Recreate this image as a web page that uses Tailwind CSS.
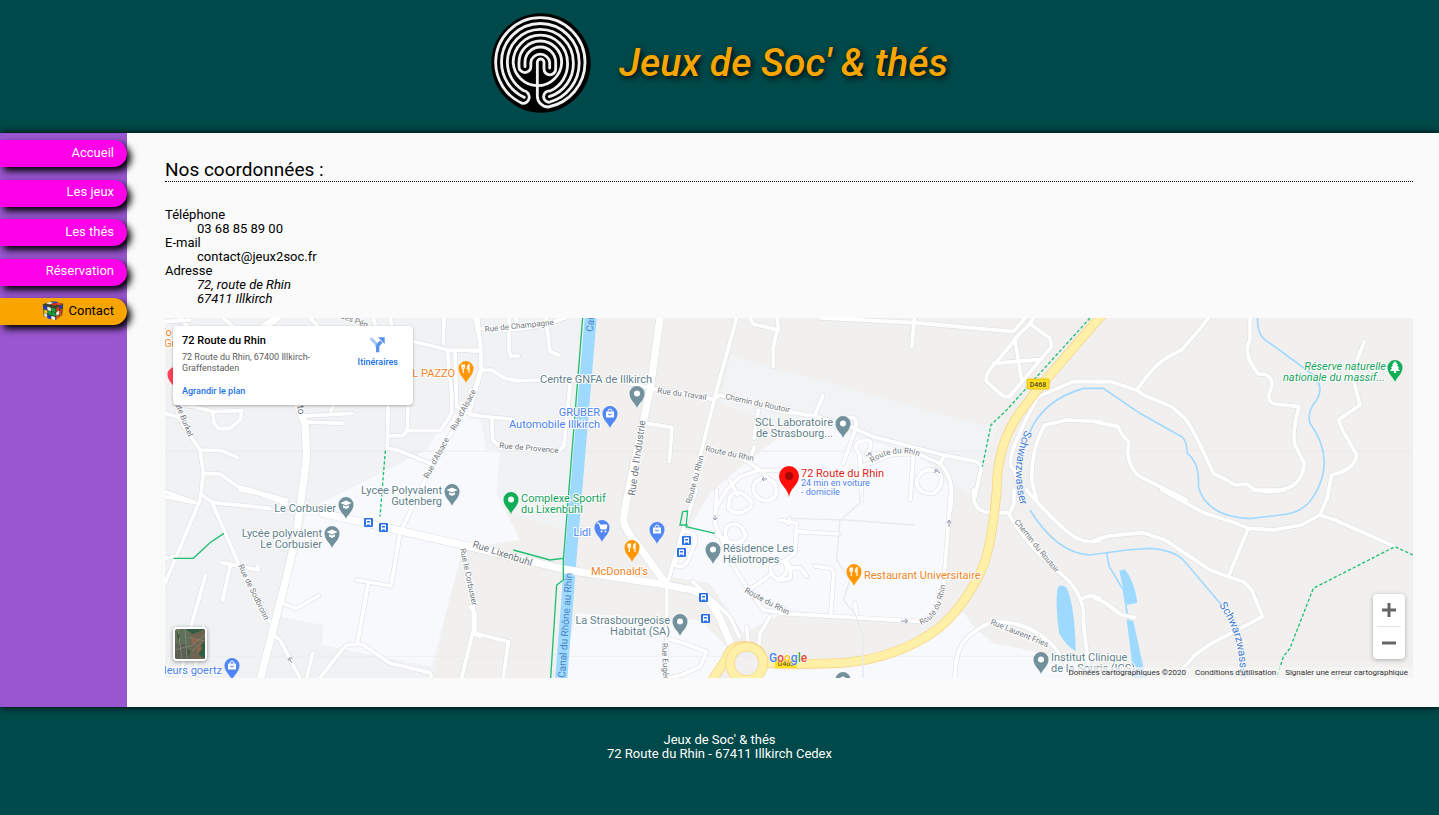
<!DOCTYPE html>
<html lang="fr">
<head>
<meta charset="utf-8">
<meta name="viewport" content="width=device-width, initial-scale=1">
<title>Jeux de Soc' &amp; thés</title>
<script src="https://cdn.jsdelivr.net/npm/@tailwindcss/browser@4"></script>
</head>
<body class="flex min-h-screen flex-col bg-[#00494a] font-['Roboto',sans-serif] text-[13px] leading-[14px] text-black">

<header class="flex items-center justify-center gap-7 pt-[13px] pb-5">
  <svg class="size-[100px]" viewBox="18 15 300 300" role="img" aria-label="Labyrinthe">
    <circle cx="168" cy="165" r="149" fill="#000"/>
    <g fill="none" stroke="#f1f1f1" stroke-width="8.500" stroke-linecap="round" stroke-linejoin="round">
      <path d="M120 176V163A46 46 0 0 1 212 163V183A17.5 17.5 0 0 1 177 183V163A10 10 0 0 0 157 163V264A33 33 0 0 0 190 297A136 136 0 0 0 300 163A134 134 0 0 0 32 163A136 136 0 0 0 111 286A18 18 0 0 0 116 248A99 99 0 0 1 67 163A99 99 0 0 1 265 163A103 103 0 0 1 193 266"/>
      <path d="M194 180V163A28.5 28.5 0 0 0 137.500 163V176A17.750 17.750 0 0 1 102 176V163A64 64 0 0 1 230 163A72 72 0 0 1 157 233A74 74 0 0 1 84.500 163A81.500 81.500 0 0 1 247.500 163A88 88 0 0 1 195 249A17 17 0 0 0 191 283A121 121 0 0 0 282.500 163A116.500 116.500 0 0 0 49.500 163A116 116 0 0 0 118 268"/>
    </g>
  </svg>
  <h1 class="text-[39px] leading-[48px] font-medium italic text-[#f9a500] [text-shadow:2px_2px_6px_#000]">Jeux de Soc' &amp; thés</h1>
</header>

<div class="relative flex bg-[#fafafa] shadow-[0_0_8px_#000]">
  <nav class="w-[127px] shrink-0 bg-[#9956d0] pt-[7px]" aria-label="Menu principal">
    <ul class="flex h-[185px] flex-col justify-between text-white">
      <li><a href="#accueil" class="flex h-[27px] items-center justify-end rounded-r-full bg-[#ff00e8] pr-[13px] pb-[2px] shadow-[4px_4px_7px_#000]">Accueil</a></li>
      <li><a href="#jeux" class="flex h-[27px] items-center justify-end rounded-r-full bg-[#ff00e8] pr-[13px] pb-[2px] shadow-[4px_4px_7px_#000]">Les jeux</a></li>
      <li><a href="#thes" class="flex h-[27px] items-center justify-end rounded-r-full bg-[#ff00e8] pr-[13px] pb-[2px] shadow-[4px_4px_7px_#000]">Les thés</a></li>
      <li><a href="#reservation" class="flex h-[27px] items-center justify-end rounded-r-full bg-[#ff00e8] pr-[13px] pb-[2px] shadow-[4px_4px_7px_#000]">Réservation</a></li>
      <li><a href="#contact" aria-current="page" class="flex h-[27px] items-center justify-end gap-[5px] rounded-r-full bg-[#f9a500] pr-[13px] pb-[2px] text-black shadow-[4px_4px_7px_#000]">
        <svg class="h-5 w-[22px]" viewBox="0 0 60 60" preserveAspectRatio="none" aria-hidden="true">
          <path d="M2 10L27 1L58 8L55 42L36 58L5 46Z" fill="#39442a"/>
          <g stroke-width="1.500" stroke-linejoin="round">
          <path d="M13 7l8-3 8 2-8 3z" fill="#fff" stroke="#fff"/><path d="M25 10l9-3 9 2-8 4z" fill="#f22c16" stroke="#f22c16"/><path d="M40 5l8 1 7 3-7 3-8-3z" fill="#ef4a21" stroke="#ef4a21"/><path d="M31 4l6-2 6 2-6 2z" fill="#2a46dd" stroke="#2a46dd"/>
          <path d="M4 14l8 3v9l-7-3zM15 42l8 3v9l-7-3z" fill="#2634d9" stroke="#2634d9"/><path d="M15 18l9 3v9l-8-3zM7 37l6 2v9l-6-3z" fill="#e4f0dc" stroke="#e4f0dc"/><path d="M27 22l9 2v9l-9-2zM17 30l8 3v9l-7-3zM28 34l8 3v8l-8-3z" fill="#17a63a" stroke="#17a63a"/><path d="M6 27l8 2v8l-7-2z" fill="#efca21" stroke="#efca21"/><path d="M26 46l9 3v8l-8-3z" fill="#fff" stroke="#fff"/>
          <path d="M40 22l6-4v9l-6 5zM49 27l5-3-1 8-5 4z" fill="#ee3a18" stroke="#ee3a18"/><path d="M49 16l6-4v8l-6 4z" fill="#2739cf" stroke="#2739cf"/><path d="M40 34l6-4v9l-6 4z" fill="#fff" stroke="#fff"/><path d="M39 47l6-4v6l-6 5zM48 38l5-3-1 7-4 4z" fill="#ef551e" stroke="#ef551e"/>
          </g>
        </svg>
        <span>Contact</span></a></li>
    </ul>
  </nav>

  <main class="min-w-0 flex-1 pt-[25px] pr-[26px] pb-[29px] pl-[38px]">
    <h2 class="border-b border-dotted border-black text-[19px] leading-[23px]">Nos coordonnées :</h2>
    <dl class="mt-[26px]">
      <dt>Téléphone</dt>
      <dd class="ml-8">03 68 85 89 00</dd>
      <dt>E-mail</dt>
      <dd class="ml-8">contact@jeux2soc.fr</dd>
      <dt>Adresse</dt>
      <dd class="ml-8"><address>72, route de Rhin<br>67411 Illkirch</address></dd>
    </dl>

    <section class="relative mt-3 h-[360px] overflow-hidden bg-[#f1f0ef]" aria-label="Plan d'accès">
      <svg class="block h-full w-full" viewBox="165 318 1248 360" preserveAspectRatio="xMidYMid slice" role="img" aria-label="Carte d'Illkirch-Graffenstaden">
        <defs>
          <path id="pin" d="M0 0C-1-4-7.500-8-7.500-14.500a7.500 7.500 0 0 1 15 0C7.500-8 1-4 0 0z"/>
          <g id="dot"><use href="#pin"/><circle cy="-14.500" r="3" fill="#fff"/></g>
          <g id="school"><use href="#pin"/><path d="M-5.500-16L0-18.500 5.500-16 0-13.500zM-3-13.800L0-12.500 3-13.800V-11.500L0-10-3-11.500z" fill="#fff"/></g>
          <g id="food"><use href="#pin"/><path d="M-4-18.500v3q0 1 1.200 1.200V-10M-1.500-18.500v3q0 1-1.300 1.200M-2.800-18.500v3M3-10v-8.500q-1.600 1-1.600 4.500H3" fill="none" stroke="#fff" stroke-width="1.200"/></g>
          <g id="bag"><use href="#pin"/><path d="M-4-16.500h8v6h-8z" fill="#fff"/><path d="M-2-16.500q0-2.500 2-2.500t2 2.500" fill="none" stroke="#fff"/><path d="M-2-14q2 2 4 0" fill="none" stroke="#5186f5"/></g>
          <g id="bus"><rect width="9" height="9" rx="1" fill="#2b70ea"/><path d="M2 1.500h5v6h-1v-1h-3v1h-1z" fill="#fff"/><path d="M3 3h3v1.500H3z" fill="#2b70ea"/></g>
          <g id="lanes">
            <g transform="translate(480 930)">
              <path d="M15 35L90 30M60 24L82 48M190 24L220 50M450 24L480 55L600 70M640 24L650 60M690 24L700 70M852 24L850 100M640 80L765 95L865 120L955 122M748 95L742 362M685 250L682 414L717 422L810 460M685 378L730 376L740 362L842 362L875 310V250L862 120M885 120L890 290L925 310L960 318M435 318L575 310M440 336L550 340M512 302L525 280M15 310L50 320M40 250L60 330L120 420L130 490L122 560M50 285L105 290L160 305L245 302L240 330L210 355H175L162 340L158 305M120 420L185 422L232 442M130 490L180 492L235 530L290 545L380 570M15 545L100 575"/>
              <path d="M955 24V60L962 110V180L940 250L790 520L720 670"/>
            </g>
            <g transform="translate(480 1470)">
              <path d="M15 20L105 38M125 15L155 35L235 220L330 395M15 280L120 30M185 218L295 240L293 230M210 232L188 330M137 255L90 420L60 560M130 410L100 560M370 340L408 356L475 318M590 270L693 288L722 118M625 280L592 460M480 564L530 500L560 465L605 462L690 520L810 548L815 564M340 435L360 450L420 564M458 490L440 564M240 0L300 12L380 42M160 38L330 55M15 205L40 200"/>
              <path d="M912 170L940 350V420L905 564M940 430L960 440"/>
            </g>
            <g transform="translate(1410 930)">
              <path d="M15 24L30 90L35 180L0 300M0 122H30M20 55L120 60L200 50L285 24M117 24V120L122 138H145M228 24L240 125L268 135M138 24L142 50M35 180H65L105 205L140 212L240 210H440L540 235M300 225L282 408L265 425L90 410L68 390L66 325M0 315L130 328M540 235L732 268L750 255L960 310M530 340L606 352L598 455M865 300L852 385M853 410L845 435M825 450L870 480L890 500M840 24L850 42L925 60L922 24M922 60L910 110V170"/>
              <path d="M800 24L740 240L700 400L655 570M985 480L860 482L810 500L770 540L740 590M780 510L802 555M850 530Q855 505 885 505Q920 510 920 540T885 572Q850 565 850 530Z"/>
            </g>
            <g transform="translate(1410 1470)">
              <path d="M678 0L630 150L595 270M640 125Q680 120 675 160L655 210Q640 240 615 225L632 160M668 275L780 380L808 440M590 300V564M590 445L640 460L710 485L690 530L635 555L595 564M0 350L15 370V430L115 455L100 564M740 0L735 100L780 210L835 300L880 360L960 372M780 20Q800-5 830 20T830 60Q800 80 775 55ZM770 110Q800 90 820 120T795 160Q755 155 770 110M835 300L880 270L905 250Q890 220 930 215T960 265Q920 280 905 250M780 160L735 130M900 380L870 430L865 480M830 410L835 470"/>
            </g>
            <g transform="translate(2340 930)">
              <path d="M120 24L400 38L700 65L735 24M403 24L396 110M705 85L750 42L810 85L815 110L785 145L690 258Q680 265 665 255L620 215Q615 205 625 185L705 90L725 210M640 160L785 148M750 42L760 24M0 300L110 320L210 350L280 380L490 435L590 455L605 470L585 560M105 315L128 258M190 460L225 360Q235 325 215 322T200 350M240 435Q210 400 250 392T260 435M240 440L245 570M245 470L330 435L410 430L480 460Q510 490 515 540L512 600M480 460L495 435M400 440L390 570M410 510Q425 475 455 480T485 510T460 550Q410 555 410 510"/>
              <path d="M960 215H880L775 260Q740 320 708 395T705 480L725 570M960 335L860 330L795 345Q755 410 755 510L770 570"/>
            </g>
            <g transform="translate(2340 1470)">
              <path d="M512 0L505 100L490 300L475 350L430 395L230 383L0 370M580 0Q575 65 630 68H690L702 40V0M685 70Q750 180 835 245T910 400L930 564M910 325Q930 310 960 325M740 0Q790 60 850 115T960 150M105 228L150 235Q165 240 160 270L152 375M0 90L50 100L45 190L10 215L25 235L60 232L80 258M55 125L178 132M25 100L30 85M0 265Q25 250 20 232M225 340L230 385M525 564Q525 480 560 445T640 395Q760 395 830 480L870 540"/>
            </g>
            <g transform="translate(3285 930)">
              <path d="M0 215H50L105 235L125 240L145 255L230 290L270 325Q290 350 320 415T355 490L395 510L420 525L455 522L480 540H550Q620 535 628 460L600 405Q590 370 612 290L540 282Q510 275 530 230Q535 190 490 192Q440 130 465 90V24M125 240Q175 170 205 150T260 120L320 50L340 24M0 335L70 350Q80 380 102 395L98 430Q105 480 135 500L275 570M808 95L770 190L795 285L730 330L745 365L785 435Q780 480 710 495L695 570"/>
            </g>
            <g transform="translate(3285 1470)">
              <path d="M200 0L330 70L410 95L460 115L535 120L620 105L675 75L700 15V0M675 75L720 90L900 170M460 115L400 260M0 150L40 138L145 128L210 150L345 240L400 260L445 275L470 300L503 380L350 460L300 495L260 540M0 325L30 338L80 375L120 383M475 0Q530 10 570 0"/>
            </g>
          </g>
          <g id="avenues">
            <path d="M880 1185L915 1270L920 1370L890 1600L860 1730L780 2040M970 1540L1410 1640L1700 1710L2000 1755L2050 1765Q2120 1770 2160 1855L2200 1950M1980 954L1950 1170L1880 1500L1870 1560Q1875 1590 1910 1630L1990 1740M750 1010L830 954"/>
          </g>
          <path id="main-road" d="M2130 2050L2180 1975Q2190 1935 2240 1938Q2280 1940 2290 1980Q2310 1995 2370 1993L2500 1990Q2650 1985 2770 1915Q2870 1860 2940 1720Q2975 1650 2990 1470Q2990 1330 3065 1230L3120 1160L3310 940"/>
        </defs>
        <g transform="scale(.33333)">
          <path d="M495 954H1740L1700 1590L1400 1500L1380 1630L1300 2034H495Z" fill="#f1f2f4"/>
          <path d="M920 1530L1280 1350L1350 1240L1440 1250L1480 1460L1560 1620L1420 1640L1390 1640L1295 2000L965 1935L970 1875L840 1850Z" fill="#f8f9fc"/>
          <path d="M1430 1350L1500 1350L1480 1600L1420 1600Z" fill="#f8f9fc"/>
          <path d="M2190 1065L2960 1280L3010 1240L2950 1390L2920 1490L2780 1410L2380 1290L2160 1210Z" fill="#f1f3f4"/>
          <path d="M2130 1480L2200 1420L2400 1260L2770 1370L2850 1460L2830 1790L2770 1865L2350 1840L2230 1900L2130 1750L2000 1730L2080 1560Z" fill="#f8f9fc"/>
          <path d="M1730 1840L2100 1860L2180 1940L2130 2034H1680Z" fill="#f8f9fc"/>
          <path d="M2220 2034L2350 1995L2590 1980L2760 1930L2890 1835L2920 1880L2980 1930L3240 1980V2034Z" fill="#f8f9fc"/>
          <path d="M495 1354H4239M495 1969H4239" fill="none" stroke="#e9eaeb" stroke-width="2"/>
          <path d="M1772 954L1712 1670L1684 2034" fill="none" stroke="#9edaff" stroke-width="36"/>
          <g fill="none" stroke="#a2d9ff" stroke-width="5">
            <path d="M3090 1295Q3130 1200 3250 1165L3310 1165L3420 1240L3545 1310Q3560 1320 3562 1360Q3600 1390 3595 1460Q3620 1550 3750 1556L3840 1545Q3910 1540 3940 1490Q4010 1380 3930 1270Q3920 1235 3950 1200Q3980 1150 3920 1110L3810 1030Q3770 1010 3773 954M3090 1530Q3170 1660 3270 1665L3380 1650L3450 1645Q3520 1650 3550 1680L3665 1815M3320 1660L3328 1700L3370 1770L3385 1860"/>
          </g>
          <path d="M3173 1763Q3182 1750 3200 1763Q3225 1820 3227 1954Q3200 1940 3177 1900Q3165 1800 3173 1763ZM3358 1712L3375 1708Q3405 1750 3412 1808L3380 1815ZM3380 1860L3400 1862L3437 2034H3402Z" fill="#9edaff"/>
          <g fill="none" stroke-linecap="round" stroke-linejoin="round">
            <use href="#lanes" stroke="#dfe3e7" stroke-width="15"/>
            <use href="#avenues" stroke="#dfe3e7" stroke-width="26"/>
            <use href="#lanes" stroke="#fff" stroke-width="11"/>
            <use href="#avenues" stroke="#fff" stroke-width="22"/>
            <use href="#main-road" stroke="#f7d58a" stroke-width="29"/>
            <use href="#main-road" stroke="#fff0a8" stroke-width="24"/>
            <circle cx="2240" cy="1990" r="50" stroke="#f7d58a" stroke-width="29"/>
            <circle cx="2240" cy="1990" r="50" stroke="#fff0a8" stroke-width="24"/>
            <path d="M2585 1480L2580 1510L2520 1560L2510 1680L2550 1740L2530 1800L2565 1840L2590 1910V2034M2370 1555L2540 1560L2740 1575" stroke="#e8eaed" stroke-width="4"/>
          </g>
          <g fill="none" stroke="#1fbf72" stroke-width="4">
            <path d="M1748 954L1690 1680M1540 1650L1650 1680L1690 1675V1740L1670 1755L1652 2034M520 1675H580L630 1628L672 1600M2048 1535L2063 1533L2058 1580L2145 1600M2063 1575H2040L2048 1535"/>
            <path d="M1156 1352L1140 1550M3270 954L3020 1230L2973 1275L2947 1400M4239 1665L4185 1640L3940 1765L3870 1945L3850 1970L3830 2034" stroke-dasharray="10 6"/>
          </g>
        </g>

        <!-- Noms des rues -->
        <g font-size="8" fill="#70767d" stroke="#fff" stroke-width="2" stroke-linejoin="round" paint-order="stroke">
          <text transform="translate(340 318) rotate(20)">des Pén</text>
          <text transform="translate(485 332) rotate(-6)">Rue de Champagne</text>
          <text transform="translate(499 448) rotate(5)">Rue de Provence</text>
          <text transform="translate(657 393) rotate(8)">Rue du Travail</text>
          <text transform="translate(725 399) rotate(12)">Chemin du Routoir</text>
          <text transform="translate(705 451) rotate(12)">Route du Rhin</text>
          <text transform="translate(691 504) rotate(-75)">Route du Rhin</text>
          <text transform="translate(428 479) rotate(-62)">Rue d'Alsace</text>
          <text transform="translate(455 431) rotate(-62)">Rue d'Alsace</text>
          <text transform="translate(175 404) rotate(68)">ute Burkel</text>
          <text transform="translate(238 566) rotate(64)">Rue de Sodbronn</text>
          <text transform="translate(460 549) rotate(78)">Rue le Corbusier</text>
          <text transform="translate(662 643) rotate(88)">Rue Eugène</text>
          <text transform="translate(1014 522) rotate(51)">Chemin du Routoir</text>
          <text transform="translate(990 624) rotate(22)">Rue Laurent Fries</text>
          <text transform="translate(744 592) rotate(28)">Route du Rhin</text>
          <path id="rhin-nord" d="M872 463Q893 448 918 456" fill="none" stroke="none"/>
          <text><textPath href="#rhin-nord">Route du Rhin</textPath></text>
          <path id="rhin-est" d="M921 625Q942 618 946 580" fill="none" stroke="none"/>
          <text><textPath href="#rhin-est">Route du Rhin</textPath></text>
          <text transform="translate(297 406) rotate(80)" font-size="10">to</text>
          <text transform="translate(635 496) rotate(-82)" font-size="10">Rue de l'Industrie</text>
          <text transform="translate(472 547) rotate(18)" font-size="10">Rue Lixenbuhl</text>
        </g>
        <g font-size="10" fill="#4c82c4">
          <text transform="translate(565 678) rotate(-86)">Canal du Rhône au Rhin</text>
          <text transform="translate(593 332) rotate(-86)">Canal</text>
          <path id="river-a" d="M1025 430Q1004 480 1031 530" fill="none"/>
          <path id="river-b" d="M1219 605Q1244 640 1239 690" fill="none"/>
          <g font-size="11" fill="#3f7ad0" stroke="#fff" stroke-width="1" paint-order="stroke"><text><textPath href="#river-a">Schwarzwasser</textPath></text><text><textPath href="#river-b">Schwarzwasser</textPath></text></g>
        </g>

        <!-- Lieux -->
        <g font-size="11" stroke="#fff" stroke-width="2" stroke-linejoin="round" paint-order="stroke">
          <g fill="#5f7f8d">
            <text x="540" y="383">Centre GNFA de Illkirch</text>
            <text x="833" y="426" text-anchor="end">SCL Laboratoire</text><text x="833" y="437" text-anchor="end">de Strasbourg...</text>
            <text x="442" y="494" text-anchor="end">Lycee Polyvalent</text><text x="442" y="505" text-anchor="end">Gutenberg</text>
            <text x="336" y="512" text-anchor="end">Le Corbusier</text>
            <text x="322" y="537" text-anchor="end">Lycée polyvalent</text><text x="322" y="548" text-anchor="end">Le Corbusier</text>
            <text x="723" y="552">Résidence Les</text><text x="723" y="563">Héliotropes</text>
            <text x="670" y="624" text-anchor="end">La Strasbourgeoise</text><text x="670" y="635" text-anchor="end">Habitat (SA)</text>
            <text x="1051" y="661">Institut Clinique</text><text x="1051" y="672">de la Souris (ICS)</text>
          </g>
          <g fill="#4a80ee">
            <text x="600" y="416" text-anchor="end">GRUBER</text><text x="600" y="428" text-anchor="end">Automobile Illkirch</text>
            <text x="591" y="536" text-anchor="end">Lidl</text><text x="222" y="674" text-anchor="end">leurs goertz</text>
            <text x="801" y="486" font-size="9">24 min en voiture</text><text x="801" y="495" font-size="9">- domicile</text>
          </g>
          <g fill="#f08326">
            <text x="455" y="377" text-anchor="end">IL PAZZO</text><text x="591" y="575">McDonald's</text><text x="864" y="579">Restaurant Universitaire</text>
            <text x="164" y="336">'o</text><text x="164" y="347">Gr</text>
          </g>
          <g fill="#14a15a">
            <text x="521" y="502">Complexe Sportif</text><text x="521" y="513">du Lixenbuhl</text>
            <g font-style="italic"><text x="1386" y="370" text-anchor="end">Réserve naturelle</text><text x="1385" y="381" text-anchor="end">nationale du massif...</text></g>
          </g>
          <text x="801" y="477" fill="#dc1c20">72 Route du Rhin</text>
        </g>
        <g fill="#73919d">
          <use href="#dot" x="637" y="408"/><use href="#dot" x="843" y="438"/><use href="#dot" x="713" y="564"/><use href="#dot" x="680" y="636"/><use href="#dot" x="1041" y="674"/><use href="#dot" x="843" y="694"/>
          <use href="#school" x="346" y="519"/><use href="#school" x="332" y="548"/><use href="#school" x="452" y="506"/>
        </g>
        <g fill="#ff9800"><use href="#food" x="466" y="383"/><use href="#food" x="632" y="562"/><use href="#food" x="854" y="586"/></g>
        <g fill="#5186f5"><use href="#bag" x="610" y="428"/><use href="#bag" x="657" y="544"/><use href="#bag" x="232" y="680"/><use href="#pin" x="602" y="542"/></g>
        <path d="M597 523h2l2 6h5l1-4h-7" fill="#fff" stroke="#fff"/><circle cx="601.500" cy="531.500" r="1" fill="#fff"/><circle cx="605.500" cy="531.500" r="1" fill="#fff"/>
        <g fill="#0fae57"><use href="#dot" x="511" y="514"/><use href="#pin" x="1395" y="382"/></g>
        <path d="M1395 361l3 4h-1l2 3h-1l2 3h-4v2h-2v-2h-4l2-3h-1l2-3h-1z" fill="#fff"/>
        <g fill="#ff4257"><use href="#pin" x="175" y="389"/></g>
        <path d="M789 497C788 488 779 485 779 476a10 10 0 0 1 20 0C799 485 790 488 789 497z" fill="#fe0f0b"/><circle cx="789" cy="476" r="4" fill="#a50a08"/>
        <use href="#bus" x="364" y="518"/><use href="#bus" x="379" y="523"/><use href="#bus" x="682" y="536"/><use href="#bus" x="677" y="548"/><use href="#bus" x="699" y="593"/><use href="#bus" x="701" y="614"/>
        <g fill="none" stroke="#9297b0"><path d="M949 527v-6m-2 2l2-3 2 3M901 621h6m-2-2l3 2-3 2M292 663l-3-5m0 3v-3h3M762 479h5m-3-2l-2 2 2 2M715 515v5m-2-2l2 2 2-2M866 456l5-3m-3 0h3v3M935 470l5 3m-5 0v-3h3"/></g>
        <rect x="1027" y="379" width="22" height="10" rx="1" fill="#ffdf20" stroke="#e8c20d"/><text x="1038" y="387" text-anchor="middle" font-size="7" font-weight="500" fill="#4c4520">D468</text>
        <rect x="775" y="659" width="22" height="9" rx="1" fill="#ffdf20"/><text x="786" y="666" text-anchor="middle" font-size="7" fill="#4c4520">D468</text>
        <text x="769" y="662" font-size="12" font-weight="500" stroke="#fff" stroke-width="1" paint-order="stroke"><tspan fill="#4285f4">G</tspan><tspan fill="#ea4335">o</tspan><tspan fill="#fbbc05">o</tspan><tspan fill="#4285f4">g</tspan><tspan fill="#34a853">l</tspan><tspan fill="#ea4335">e</tspan></text>
      </svg>

      <div class="absolute top-2 left-2 flex h-[79px] w-60 justify-between rounded-sm bg-white py-2 pr-[15px] pl-[9px] text-[9px] leading-[11px] shadow-[0_1px_3px_#0000004d]">
        <div class="flex w-[150px] flex-col items-start">
          <strong class="text-[11px] leading-[13px] font-medium">72 Route du Rhin</strong>
          <span class="mt-[5px] text-[#5b5b5b]">72 Route du Rhin, 67400 Illkirch-Graffenstaden</span>
          <a href="#agrandir" class="mt-3 font-medium text-[#1a73e8]">Agrandir le plan</a>
        </div>
        <a href="#itineraires" class="flex flex-col items-center gap-1 pt-[3px] font-medium text-[#1a73e8]">
          <svg class="h-4 w-[15px]" viewBox="0 0 45 48" aria-hidden="true"><path d="M2 4L20 22V30" fill="none" stroke="#a7c8f8" stroke-width="9"/><path d="M23 46V30Q23 25 27 21L34 14" fill="none" stroke="#5593ee" stroke-width="10"/><path d="M24 1H44V21Z" fill="#5593ee"/></svg>
          <span>Itinéraires</span>
        </a>
      </div>

      <button type="button" aria-label="Vue satellite" class="absolute bottom-[17px] left-2 size-[34px] overflow-hidden rounded-sm border-2 border-white bg-[#5f6f58] shadow-[0_1px_4px_#00000066]">
        <svg class="size-full" viewBox="0 0 30 30" aria-hidden="true"><path d="M14 0h16v30H17z" fill="#6f6450"/><path d="M0 15h12l4 15H0z" fill="#5b6052"/><path d="M10 0h20l-12 5zM24 18l6-6v18l-6-4z" fill="#315b43"/><path d="M10 0l2 30M3 0l4 30M0 21l18-5 12-10M14 8l15 4M17 22l10-9" stroke="#8d9a85" stroke-width=".6" fill="none"/><path d="M16 10l5-2 2 4-6 3zM22 20l3-4 2 3-3 5z" fill="#8f674f"/><path d="M2 3l3 4-2 4zM12 20l4 2-3 5z" fill="#3d5641"/></svg>
      </button>

      <div class="absolute right-2 bottom-[19px] flex w-8 flex-col items-center rounded-sm bg-white shadow-[0_1px_4px_#0000004d]">
        <button type="button" aria-label="Zoom avant" class="flex h-8 w-8 items-center justify-center"><svg class="size-[14px]" viewBox="0 0 14 14" aria-hidden="true"><path d="M7 0v14M0 7h14" stroke="#666" stroke-width="3"/></svg></button>
        <span class="h-px w-6 bg-[#e6e6e6]"></span>
        <button type="button" aria-label="Zoom arrière" class="flex h-8 w-8 items-center justify-center"><svg class="size-[14px]" viewBox="0 0 14 14" aria-hidden="true"><path d="M0 7h14" stroke="#666" stroke-width="3"/></svg></button>
      </div>

      <div class="absolute right-0 bottom-0 flex gap-[9px] bg-[#f5f5f5]/70 pr-[5px] text-[8px] leading-[11px] text-[#333]">
        <span>Données cartographiques ©2020</span>
        <a href="#conditions">Conditions d'utilisation</a>
        <a href="#signaler">Signaler une erreur cartographique</a>
      </div>
    </section>
  </main>
</div>

<footer class="flex-1 pt-[26px] pb-8 text-center text-white">
  <p>Jeux de Soc' &amp; thés</p>
  <p>72 Route du Rhin - 67411 Illkirch Cedex</p>
</footer>
</body>
</html>
